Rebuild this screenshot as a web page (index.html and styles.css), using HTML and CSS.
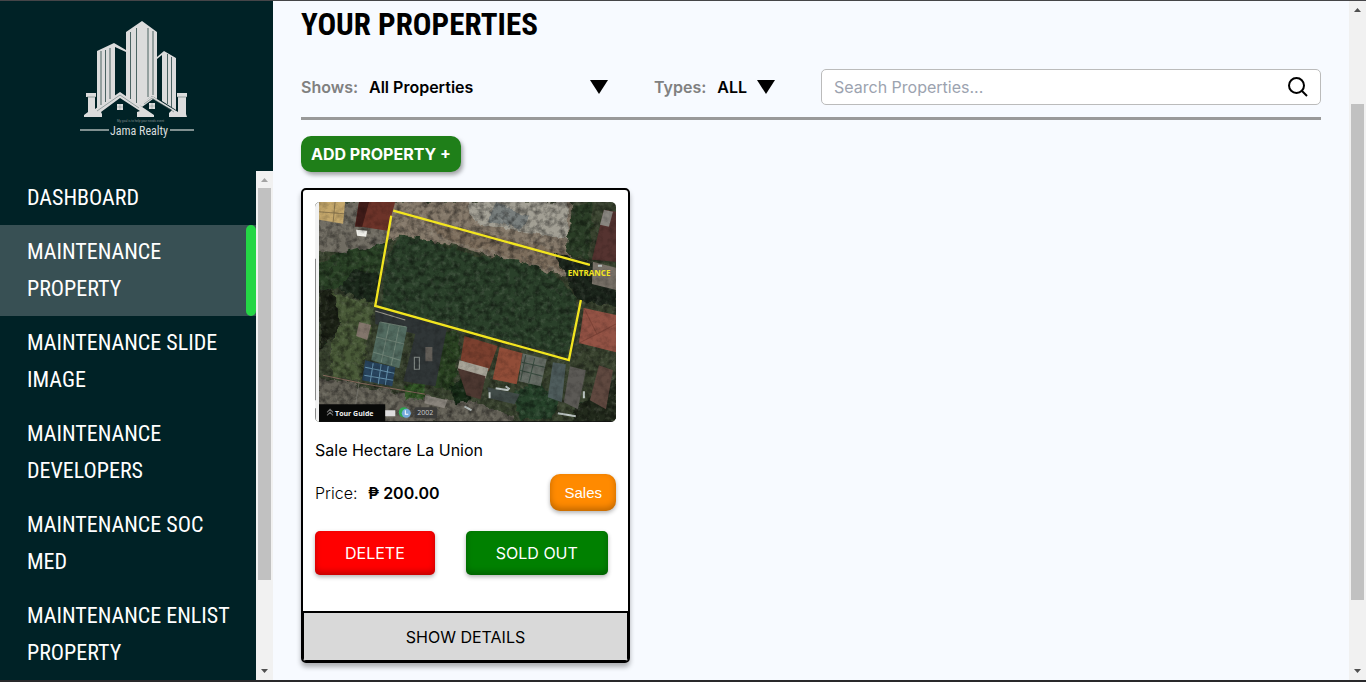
FILE: index.html
```html
<!DOCTYPE html>
<html lang="en">
<head>
<meta charset="utf-8">
<title>Jama Realty - Maintenance Property</title>
<link rel="stylesheet" href="styles.css">
</head>
<body>
<div class="window">
  <div class="edge-top"></div>
  <div class="app">
    <aside class="sidebar">
      <div class="brand">
        <svg class="logo" viewBox="80 20 115 120" role="img" aria-label="Jama Realty">
          <g fill="#dcdcdc">
            <path d="M97 51L114 43L126 50V52L115 47V97L97 109Z"/>
            <path d="M126 32L142 21L157 32V99L152 96L139 106L126 98Z"/>
            <path d="M157 57L164 51L176 58V110L162 101V55L157 59Z"/>
            <path d="M86 93H96V97H95V109L120 92L154 115V117H137V112L140 111L120 98L101 112L102 114V117H84V115L88 112V97H86Z"/>
            <path d="M139 105L152 96L178 112V97H177V93H187V97H186V114L187 117H169V113L172 110L153 99L142 107Z"/>
            <path d="M117 104h6v6h-6zM149 103h6v6h-6z"/>
          </g>
          <g stroke="#4c6463" fill="none">
            <path d="M101 51V105M105.500 50V102M110 48V99"/>
            <path d="M130.500 32V99M136.500 28V103M148 28V97M153 31V95"/>
            <path d="M167.500 54V104M171.500 57V107"/>
          </g>
          <g stroke="#4c6463" stroke-width=".5" fill="none">
            <path d="M97 111L120 95L139 108M144 104L152 98L174 112M87 97H96M177 97H187"/>
            <path d="M120 104V110M117 107H123M152 103V109M149 106H155" opacity=".6"/>
          </g>
          <path d="M80 130H109M170 130H194" stroke="#aab5b4" stroke-width="1.600"/>
          <text class="logo-tag" x="117" y="122">My goal is to help your needs event</text>
          <text class="logo-name" x="139" y="135" text-anchor="middle">Jama Realty</text>
        </svg>
      </div>
      <div class="menu-area">
        <nav class="menu" aria-label="Main">
          <a href="#dashboard">DASHBOARD</a>
          <a href="#property" class="active" aria-current="page">MAINTENANCE PROPERTY</a>
          <a href="#slides">MAINTENANCE SLIDE IMAGE</a>
          <a href="#developers">MAINTENANCE DEVELOPERS</a>
          <a href="#socmed">MAINTENANCE SOC MED</a>
          <a href="#enlist">MAINTENANCE ENLIST PROPERTY</a>
        </nav>
        <div class="scrollbar" aria-hidden="true">
          <svg class="cap" viewBox="0 0 17 17"><path d="M5 11h7L8.500 7z" fill="#a3a3a3"/></svg>
          <div class="track"><div class="thumb menu-thumb"></div></div>
          <svg class="cap" viewBox="0 0 17 17"><path d="M5 6h7l-3.500 4z" fill="#505050"/></svg>
        </div>
      </div>
    </aside>

    <main class="content">
      <h1>YOUR PROPERTIES</h1>
      <div class="filters">
        <label class="filter shows"><span>Shows:</span>
          <select><option>All Properties</option></select>
          <svg class="caret" viewBox="0 0 18 14"><path d="M0 0h18L9 14z"/></svg>
        </label>
        <label class="filter types"><span>Types:</span>
          <select><option>ALL</option></select>
          <svg class="caret" viewBox="0 0 18 14"><path d="M0 0h18L9 14z"/></svg>
        </label>
        <div class="search">
          <input type="text" placeholder="Search Properties..." aria-label="Search Properties">
          <button type="button" aria-label="Search"><svg viewBox="0 0 22 22" fill="none" stroke="#000" stroke-width="2"><circle cx="9.500" cy="9.500" r="7.500"/><path d="M15 15l5 5"/></svg></button>
        </div>
      </div>
      <button type="button" class="add">ADD PROPERTY +</button>

      <article class="card">
        <div class="card-body">
          <svg class="photo" viewBox="0 0 300 220" preserveAspectRatio="xMidYMid slice" role="img" aria-label="Aerial view of the lot">
            <defs>
              <filter id="grain" x="0" y="0" width="100%" height="100%">
                <feTurbulence type="fractalNoise" baseFrequency=".16" numOctaves="4" seed="8"/>
                <feColorMatrix values="0 0 0 0 0  0 0 0 0 0  0 0 0 0 0  2 0 0 0 -.8"/>
              </filter>
              <filter id="light" x="0" y="0" width="100%" height="100%">
                <feTurbulence type="fractalNoise" baseFrequency=".2" numOctaves="3" seed="21"/>
                <feColorMatrix values="0 0 0 0 .75  0 0 0 0 .75  0 0 0 0 .65  0 2 0 0 -1"/>
              </filter>
              <filter id="rough" x="-5%" y="-5%" width="110%" height="110%">
                <feTurbulence type="fractalNoise" baseFrequency=".12" numOctaves="3" seed="3" result="n"/>
                <feDisplacementMap in="SourceGraphic" in2="n" scale="9" xChannelSelector="R" yChannelSelector="G"/>
              </filter>
            </defs>
            <rect width="300" height="220" fill="#39432f"/>
            <g filter="url(#rough)">
              <path d="M0 0H74L72 42L30 52L0 50Z" fill="#6f6c62"/>
              <path d="M74 0H255V76L215 66L165 50L120 40L84 34L70 40Z" fill="#85796a"/>
              <path d="M150 0H252V38L222 32L196 28L160 22Z" fill="#a29f94"/>
              <path d="M180 2L214 14L205 28L172 18Z" fill="#777d7c"/>
              <path d="M105 18L250 50L254 72L190 54L132 38Z" fill="#7b6d5b"/>
              <path d="M0 66L28 50L72 42L62 86L0 88Z" fill="#2a4327"/>
              <path d="M84 34L110 37L160 54L205 58L240 74L262 98L252 154L66 106L74 52Z" fill="#2b4129"/>
              <path d="M258 2L278 0L272 60L250 50Z" fill="#293c25"/>
              <path d="M16 90L60 102L44 180L16 174Z" fill="#4a5a37"/>
              <path d="M4 84L22 94L24 130L6 146Z" fill="#1b2319"/>
              <path d="M40 68L64 72L58 102L22 87Z" fill="#1e291d"/>
              <path d="M120 126L146 132L138 190L118 184Z" fill="#2a4323"/>
              <path d="M238 52L300 68V104L262 98Z" fill="#1d281b"/>
              <path d="M4 176L80 190L160 200L198 214V220H4Z" fill="#656259"/>
              <path d="M196 190L220 180L244 195L238 216L204 218Z" fill="#26432a"/>
              <path d="M258 206L300 176V220H258Z" fill="#202c1d"/>
              <path d="M134 182L150 177L158 198L138 202Z" fill="#182a19"/>
              <path d="M90 184L112 179L108 198L88 196Z" fill="#315728"/>
            </g>
            <g filter="url(#grain)" opacity=".36"><rect width="300" height="220"/></g>
            <g filter="url(#light)" opacity=".18"><rect width="300" height="220"/></g>
            <g>
              <path d="M4 0H30L28 22L4 18Z" fill="#c5a86c"/>
              <path d="M20 0L18 21M4 10L29 12" stroke="#8c7850" fill="none"/>
              <path d="M44 0H80L72 29L40 24Z" fill="#6c3329"/>
              <path d="M44 0H54L47 25H40Z" fill="#401c19"/>
              <path d="M41 28L52 29L51 35L42 34Z" fill="#f1f1eb"/>
              <path d="M288 8L300 10V60L276 58Z" fill="#553330"/>
              <path d="M288 8L297 10L293 25L284 23Z" fill="#898680"/>
              <path d="M277 60L300 66V88L276 82Z" fill="#777067"/>
              <path d="M60 106L132 124L120 184L88 179L100 132L60 122Z" fill="#303637"/>
              <path d="M64 120L92 125L84 166L56 158Z" fill="#526b60"/>
              <path d="M65 120L91 125M61 135L89 142M58 150L85 158M74 122L66 160M84 124L76 163" stroke="#718578" fill="none"/>
              <path d="M50 158L80 165L77 184L47 178Z" fill="#28445e"/>
              <path d="M50 165L79 171M49 173L78 178M58 161L55 180M66 162L63 182M73 164L70 183" stroke="#6490aa" fill="none"/>
              <path d="M60 109L90 118" stroke="#a09d91" stroke-width="1"/>
              <path d="M44 120L56 123L52 138L41 134Z" fill="#83766c"/>
              <path d="M99 155h5v12h-5z" fill="none" stroke="#89918d"/>
              <path d="M110 145h7v14h-7z" fill="#625e58"/>
              <path d="M149 134L182 144L173 169L145 158Z" fill="#7b402f"/>
              <path d="M144 158L173 166L170 176L142 168Z" fill="#aaa69a"/>
              <path d="M142 166L170 174L165 197L151 193Z" fill="#4d3831"/>
              <path d="M184 145L207 151L201 182L177 177Z" fill="#914d38"/>
              <path d="M207 151L231 157L225 184L203 179Z" fill="#656c64"/>
              <path d="M210 153L205 178M219 156L213 181M206 160L229 165M204 168L227 174" stroke="#3a4c40" fill="none"/>
              <path d="M237 160L250 162L246 200L232 195Z" fill="#4f5d5d"/>
              <path d="M254 164L270 168L262 207L248 200Z" fill="#5c5a56"/>
              <path d="M283 163L297 168L290 207L274 198Z" fill="#604940"/>
              <path d="M268 106L300 113V150L263 141Z" fill="#945345"/>
              <path d="M268 106L281 132L300 122M281 132L263 141" stroke="#7e4438" fill="none"/>
              <path d="M110 193L132 198L129 206L109 201Z" fill="#8a857d"/>
              <path d="M172 185L204 192L199 202L174 196Z" fill="#414b48"/>
              <path d="M180 186L193 188M174 190v6M149 204l7 4M242 211l18 3M268 189v7M282 64h4M190 184l4 3" stroke="#bfc7c5" stroke-width="2" fill="none"/>
              <path d="M8 173L46 181L110 192" stroke="#86695e" fill="none"/>
              <path d="M44 180L38 218" stroke="#84827a" stroke-width=".7"/>
            </g>
            <rect width="300" height="220" filter="url(#grain)" opacity=".22"/>
            <g fill="none" stroke="#f2e51f" stroke-width="2.300">
              <path d="M78 9L274 63M76 14L60 104L253 158L265 98"/>
            </g>
            <text class="entrance" x="252" y="74">ENTRANCE</text>
            <path d="M0 0H4V220H0Z" fill="#f1f1f1"/>
            <path d="M.500 57V198M.500 206V218" stroke="#888"/>
            <path d="M4 202H70V220H4Z" fill="#080908"/>
            <path d="M12 210l3-3 3 3M12 213l3-3 3 3" stroke="#777" fill="none"/>
            <text class="tour" x="20" y="214">Tour Guide</text>
            <path d="M70 208h10v6h-10z" fill="#ddd"/>
            <circle cx="88.500" cy="210" r="5" fill="#31a653"/><circle cx="91" cy="211" r="4.500" fill="#74a9dc"/><path d="M90 208v4h3" stroke="#fff" fill="none"/>
            <rect x="99" y="205" width="23" height="11" rx="2" fill="#3b3b39"/>
            <text class="year" x="102" y="213">2002</text>
            <path d="M4 219.500H300" stroke="#111"/>
          </svg>
          <h2>Sale Hectare La Union</h2>
          <div class="price-row">
            <p>Price: <strong>₱ 200.00</strong></p>
            <span class="badge">Sales</span>
          </div>
          <div class="actions">
            <button type="button" class="delete">DELETE</button>
            <button type="button" class="sold">SOLD OUT</button>
          </div>
        </div>
        <button type="button" class="details">SHOW DETAILS</button>
      </article>
    </main>

    <div class="scrollbar" aria-hidden="true">
      <svg class="cap" viewBox="0 0 17 17"><path d="M5 11h7L8.500 7z" fill="#505050"/></svg>
      <div class="track page-track"><div class="thumb page-thumb"></div></div>
      <svg class="cap" viewBox="0 0 17 17"><path d="M5 6h7l-3.500 4z" fill="#505050"/></svg>
    </div>
  </div>
  <div class="edge-bottom"></div>
</div>
</body>
</html>
```

FILE: styles.css
```css
* { box-sizing: border-box; }
body { margin: 0; background: #f7faff; color: #000; font: 16px/24px Inter, "Liberation Sans", sans-serif; }
button, input, select { font: inherit; color: inherit; }
h1, h2, p { margin: 0; }
svg { display: block; }

.window { display: flex; flex-direction: column; height: 100vh; overflow: hidden; }
.edge-top { flex: none; height: 1px; background: #454548; }
.edge-bottom { flex: none; height: 2px; background: #29292b; }
.app { flex: 1; min-height: 0; display: flex; }

.sidebar { flex: none; width: 273px; display: flex; flex-direction: column; background: #002226; }
.brand { flex: none; padding: 19px 0 31px 80px; }
.logo { width: 115px; height: 120px; }
.logo-name { font: 12px "Roboto Condensed", "Liberation Sans Narrow", sans-serif; fill: #d8dddd; }
.logo-tag { font: 3px "Liberation Sans", sans-serif; fill: #82908f; }
.menu-area { flex: 1; min-height: 0; display: flex; }
.menu { flex: 1; overflow: hidden; }
.menu a { display: block; padding: 8px 20px 9px 27px; color: #fff; font: 22px/37px "Roboto Condensed", "Liberation Sans Narrow", sans-serif; text-decoration: none; }
.menu a.active { position: relative; background: #385054; }
.menu a.active::after { content: ""; position: absolute; top: 0; right: 0; bottom: 0; width: 10px; border-radius: 5px; background: #24d645; }

.scrollbar { flex: none; width: 17px; display: flex; flex-direction: column; background: #f1f1f1; }
.cap { flex: none; width: 17px; height: 17px; }
.track { flex: 1; padding: 0 2px; }
.page-track { padding-top: 86px; }
.thumb { background: #c1c1c1; }
.menu-thumb { height: 82.5%; }
.page-thumb { height: 88.8%; }

.content { flex: 1; min-width: 0; padding: 5px 28px; }
.content h1 { font: bold 31px/38px "Roboto Condensed", "Liberation Sans Narrow", sans-serif; }
.filters { display: flex; align-items: center; margin-top: 16px; padding: 9px 0 12px; border-bottom: 3px solid #999; }
.filter { display: flex; align-items: center; font-weight: 600; }
.filter span { color: #808080; }
.filter select { appearance: none; flex: 1; min-width: 0; margin-left: 11px; padding: 0; border: 0; background: none; font-weight: 600; }
.shows { width: 307px; }
.types { width: 121px; margin-left: 46px; }
.caret { width: 18px; height: 14px; }
.search { flex: 1; display: flex; margin-left: 46px; height: 36px; border: 1px solid #bbb; border-radius: 5px; background: #fff; }
.search input { flex: 1; min-width: 0; padding: 0 12px; border: 0; background: none; outline: 0; }
.search input::placeholder { color: #9ca3af; opacity: 1; }
.search button { flex: none; width: 44px; padding: 0 11px; border: 0; background: none; }
.search svg { width: 22px; height: 22px; }
.add { display: block; height: 36px; margin-top: 16px; padding: 0 10px; border: 0; border-radius: 10px; background: #1f7f19; color: #fff; font-weight: 700; box-shadow: 2px 3px 4px rgba(0,0,0,.35); }

.card { width: 329px; margin-top: 16px; border: 2px solid #000; border-radius: 5px; background: #fff; box-shadow: 0 4px 5px rgba(0,0,0,.3); overflow: hidden; }
.card-body { padding: 12px 12px 36px; }
.photo { width: 100%; height: 220px; border-radius: 5px; }
.entrance { font: bold 8px "Open Sans", sans-serif; fill: #f2e51f; }
.tour { font: bold 7px "Open Sans", sans-serif; fill: #eee; }
.year { font: 7px "Open Sans", sans-serif; fill: #ccc; }
.card h2 { margin-top: 16px; font-size: 16px; line-height: 24px; font-weight: 400; }
.price-row { display: flex; align-items: center; justify-content: space-between; margin-top: 12px; }
.price-row p { font-weight: 300; }
.price-row strong { margin-left: 6px; font-weight: 600; }
.badge { padding: 6px 14px; border-radius: 10px; background: #ff8a00; color: #fff; font: 15px/25px "Liberation Sans", sans-serif; box-shadow: inset 0 -3px 6px rgba(0,0,0,.25), 0 2px 4px rgba(0,0,0,.3); }
.actions { display: flex; gap: 31px; margin-top: 20px; }
.actions button { height: 44px; padding: 0 30px; border: 0; border-radius: 5px; color: #fff; box-shadow: inset 0 -3px 6px rgba(0,0,0,.25), 0 2px 4px rgba(0,0,0,.3); }
.actions .delete { background: #f00; }
.actions .sold { background: #008000; }
.details { display: block; width: 100%; height: 50px; padding: 0; border: 1px solid #000; border-top-width: 2px; background: #d9d9d9; }
```
